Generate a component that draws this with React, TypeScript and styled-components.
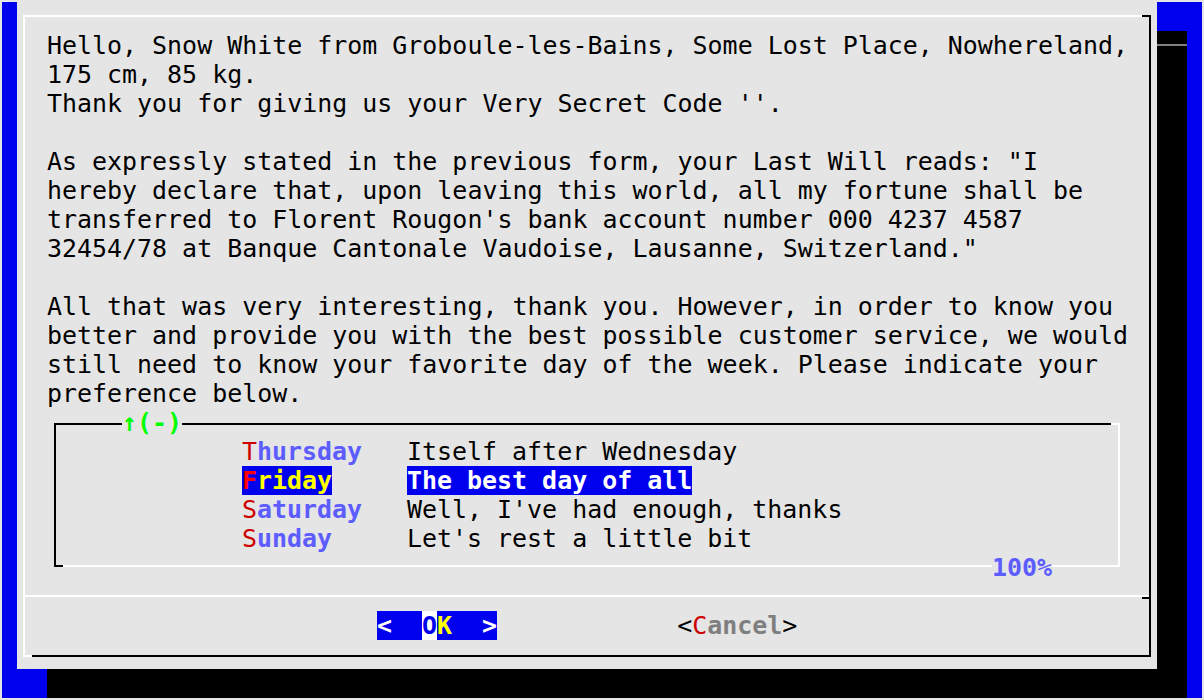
import React from "react";
import styled, { createGlobalStyle, css } from "styled-components";

const C = {
  screen: "#0000ee",
  panel: "#e5e5e5",
  black: "#000000",
  white: "#ffffff",
  red: "#cd0000",
  brightRed: "#ff0000",
  boldBlue: "#5c5cff",
  yellow: "#ffff00",
  green: "#00ff00",
  grey: "#7f7f7f",
};

const Global = createGlobalStyle`
  html, body { margin: 0; padding: 0; background: ${C.panel}; }
  body { padding: 2px; }
  * { box-sizing: border-box; }
`;

const Screen = styled.div`
  display: grid;
  grid-template-columns: repeat(80, 15px);
  grid-template-rows: repeat(24, 29px);
  width: 1200px;
  height: 696px;
  background: ${C.screen};
  font-family: "DejaVu Sans Mono", monospace;
  font-size: 24.95px;
  line-height: 29px;
  color: ${C.black};
`;

const Dialog = styled.div`
  grid-column: 2 / 78;
  grid-row: 1 / 24;
  background: ${C.panel};
  padding: 13px 6px 12px 6px;
  display: flex;
  position: relative;
  z-index: 1;
`;

const Frame = styled.div`
  position: relative;
  flex: 1;
  display: flex;
  flex-direction: column;
  border-style: solid;
  border-width: 2px;
  border-color: ${C.white} ${C.black} ${C.black} ${C.white};
  &::before {
    content: "";
    position: absolute;
    top: -2px;
    right: -2px;
    width: 9px;
    height: 2px;
    background: ${C.black};
  }
  &::after {
    content: "";
    position: absolute;
    bottom: -2px;
    left: -2px;
    width: 9px;
    height: 2px;
    background: ${C.white};
  }
`;

const Body = styled.div`
  height: 578px;
  padding: 14px 0 0 22px;
`;

const Line = styled.div`
  height: 29px;
  white-space: pre;
`;

const MenuBox = styled.div`
  position: relative;
  width: 1066px;
  height: 144px;
  margin: 15px 0 0 7px;
  border-style: solid;
  border-width: 2px;
  border-color: ${C.black} ${C.white} ${C.white} ${C.black};
  padding: 12px 0 0 186px;
  &::before {
    content: "";
    position: absolute;
    top: -2px;
    right: -2px;
    width: 9px;
    height: 2px;
    background: ${C.white};
  }
  &::after {
    content: "";
    position: absolute;
    bottom: -2px;
    left: -2px;
    width: 9px;
    height: 2px;
    background: ${C.black};
  }
`;

const BoxTitle = styled.span`
  position: absolute;
  left: 66px;
  top: -17px;
  background: ${C.panel};
  color: ${C.green};
  font-weight: bold;
  white-space: pre;
`;

const Percent = styled.span`
  position: absolute;
  left: 936px;
  top: 128px;
  background: ${C.panel};
  color: ${C.boldBlue};
  font-weight: bold;
`;

const MenuRow = styled.div`
  display: flex;
  height: 29px;
  white-space: pre;
`;

const TagCell = styled.div`
  width: 165px;
  flex: none;
`;

const Tag = styled.span<{ $selected?: boolean }>`
  font-weight: bold;
  color: ${(p) => (p.$selected ? C.yellow : C.boldBlue)};
  background: ${(p) => (p.$selected ? C.screen : "transparent")};
`;

const TagKey = styled.span<{ $selected?: boolean }>`
  color: ${(p) => (p.$selected ? C.brightRed : C.red)};
  font-weight: ${(p) => (p.$selected ? "bold" : "normal")};
`;

const Item = styled.span<{ $selected?: boolean }>`
  ${(p) =>
    p.$selected &&
    css`
      background: ${C.screen};
      color: ${C.white};
      font-weight: bold;
    `}
`;

const ButtonBar = styled.div`
  position: relative;
  border-top: 2px solid ${C.white};
  height: 60px;
  padding: 14px 0 0 352px;
  display: flex;
  gap: 180px;
  white-space: pre;
  &::after {
    content: "";
    position: absolute;
    right: 0;
    top: 0;
    width: 7px;
    height: 2px;
    background: ${C.black};
  }
`;

const Button = styled.span<{ $active?: boolean }>`
  height: 29px;
  background: ${(p) => (p.$active ? C.screen : "transparent")};
`;

const Bracket = styled.span<{ $active?: boolean }>`
  color: ${(p) => (p.$active ? C.white : C.black)};
  font-weight: ${(p) => (p.$active ? "bold" : "normal")};
`;

const BtnKey = styled.span<{ $active?: boolean }>`
  ${(p) =>
    p.$active
      ? css`
          color: ${C.screen};
          background: ${C.white};
          font-weight: bold;
        `
      : css`
          color: ${C.red};
        `}
`;

const BtnLabel = styled.span<{ $active?: boolean }>`
  font-weight: bold;
  color: ${(p) => (p.$active ? C.yellow : C.grey)};
`;

const ShadowRight = styled.div`
  grid-column: 78 / 80;
  grid-row: 2 / 25;
  background: ${C.black};
  padding-top: 13px;
`;

const ShadowLine = styled.div`
  height: 2px;
  background: ${C.grey};
`;

const ShadowBottom = styled.div`
  grid-column: 4 / 80;
  grid-row: 24 / 25;
  background: ${C.black};
`;

const message = [
  "Hello, Snow White from Groboule-les-Bains, Some Lost Place, Nowhereland,",
  "175 cm, 85 kg.",
  "Thank you for giving us your Very Secret Code ''.",
  "",
  'As expressly stated in the previous form, your Last Will reads: "I',
  "hereby declare that, upon leaving this world, all my fortune shall be",
  "transferred to Florent Rougon's bank account number 000 4237 4587",
  '32454/78 at Banque Cantonale Vaudoise, Lausanne, Switzerland."',
  "",
  "All that was very interesting, thank you. However, in order to know you",
  "better and provide you with the best possible customer service, we would",
  "still need to know your favorite day of the week. Please indicate your",
  "preference below.",
];

const days = [
  { tag: "Thursday", item: "Itself after Wednesday" },
  { tag: "Friday", item: "The best day of all", selected: true },
  { tag: "Saturday", item: "Well, I've had enough, thanks" },
  { tag: "Sunday", item: "Let's rest a little bit" },
];

export default function App() {
  return (
    <>
      <Global />
      <Screen>
        <Dialog>
          <Frame>
            <Body>
              {message.map((l, i) => (
                <Line key={i}>{l}</Line>
              ))}
              <MenuBox>
                <BoxTitle>↑(-)</BoxTitle>
                {days.map((d) => (
                  <MenuRow key={d.tag}>
                    <TagCell>
                      <Tag $selected={d.selected}>
                        <TagKey $selected={d.selected}>{d.tag[0]}</TagKey>
                        {d.tag.slice(1)}
                      </Tag>
                    </TagCell>
                    <Item $selected={d.selected}>{d.item}</Item>
                  </MenuRow>
                ))}
                <Percent>100%</Percent>
              </MenuBox>
            </Body>
            <ButtonBar>
              <Button $active>
                <Bracket $active>{"<  "}</Bracket>
                <BtnKey $active>O</BtnKey>
                <BtnLabel $active>K</BtnLabel>
                <Bracket $active>{"  >"}</Bracket>
              </Button>
              <Button>
                <Bracket>{"<"}</Bracket>
                <BtnKey>C</BtnKey>
                <BtnLabel>ancel</BtnLabel>
                <Bracket>{">"}</Bracket>
              </Button>
            </ButtonBar>
          </Frame>
        </Dialog>
        <ShadowRight>
          <ShadowLine />
        </ShadowRight>
        <ShadowBottom />
      </Screen>
    </>
  );
}
